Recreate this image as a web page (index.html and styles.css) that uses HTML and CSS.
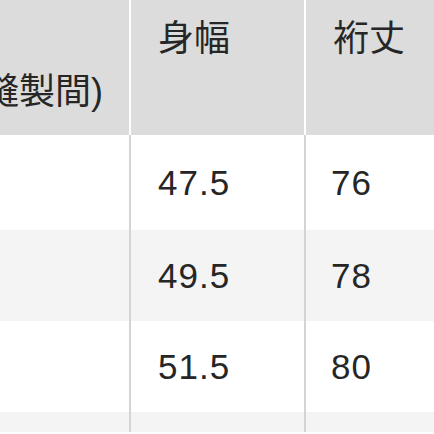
FILE: index.html
```html
<!DOCTYPE html>
<html lang="ja">
<head>
<meta charset="utf-8">
<title>サイズ表</title>
<link rel="stylesheet" href="styles.css">
</head>
<body>
<div class="sheet">
  <div class="row head">
    <div class="cell c1">着丈<br>(後中心縫製間)</div>
    <div class="cell c2">身幅</div>
    <div class="cell c3">裄丈</div>
  </div>
  <div class="row r1">
    <div class="cell c1 mid">S</div>
    <div class="cell c2 mid num">47.5</div>
    <div class="cell c3 mid num">76</div>
  </div>
  <div class="row r2 alt">
    <div class="cell c1 mid">M</div>
    <div class="cell c2 mid num">49.5</div>
    <div class="cell c3 mid num">78</div>
  </div>
  <div class="row r3">
    <div class="cell c1 mid">L</div>
    <div class="cell c2 mid num">51.5</div>
    <div class="cell c3 mid num">80</div>
  </div>
  <div class="row r4 alt">
    <div class="cell c1 mid"></div>
    <div class="cell c2 mid num"></div>
    <div class="cell c3 mid num"></div>
  </div>
</div>
</body>
</html>
```

FILE: styles.css
```css
html, body {
  margin: 0;
  padding: 0;
  background: #ffffff;
  overflow: hidden;
}
body {
  width: 434px;
  height: 434px;
  font-family: "Liberation Sans", "Noto Sans CJK JP", sans-serif;
  color: #262626;
}
.sheet {
  margin-left: -164px;
  width: 598px;
}
.row {
  display: grid;
  grid-template-columns: 295px 175px 1fr;
}
.cell {
  box-sizing: border-box;
  padding-left: 27px;
  font-size: 36px;
  line-height: 53px;
  white-space: nowrap;
}
.c1, .c2 {
  border-right: 2px solid #d4d4d4;
}
.head {
  height: 135px;
}
.head .cell {
  background: #dcdcdc;
  padding-top: 12px;
  border-right-color: #ffffff;
}
.head .c3 { border-right: none; }
.mid {
  display: flex;
  align-items: center;
}
.num {
  font-size: 35px;
  letter-spacing: 1px;
}
.c2.num { padding-left: 27px; }
.c3.num { padding-left: 25px; }
.r1 { height: 95px; }
.r2 { height: 91px; }
.r3 { height: 91px; }
.r4 {
  height: 22px;
  border-bottom: 2px solid #5a5a5a;
}
.r4 .cell { height: 20px; }
.alt .cell {
  background: #f4f4f4;
}
```
